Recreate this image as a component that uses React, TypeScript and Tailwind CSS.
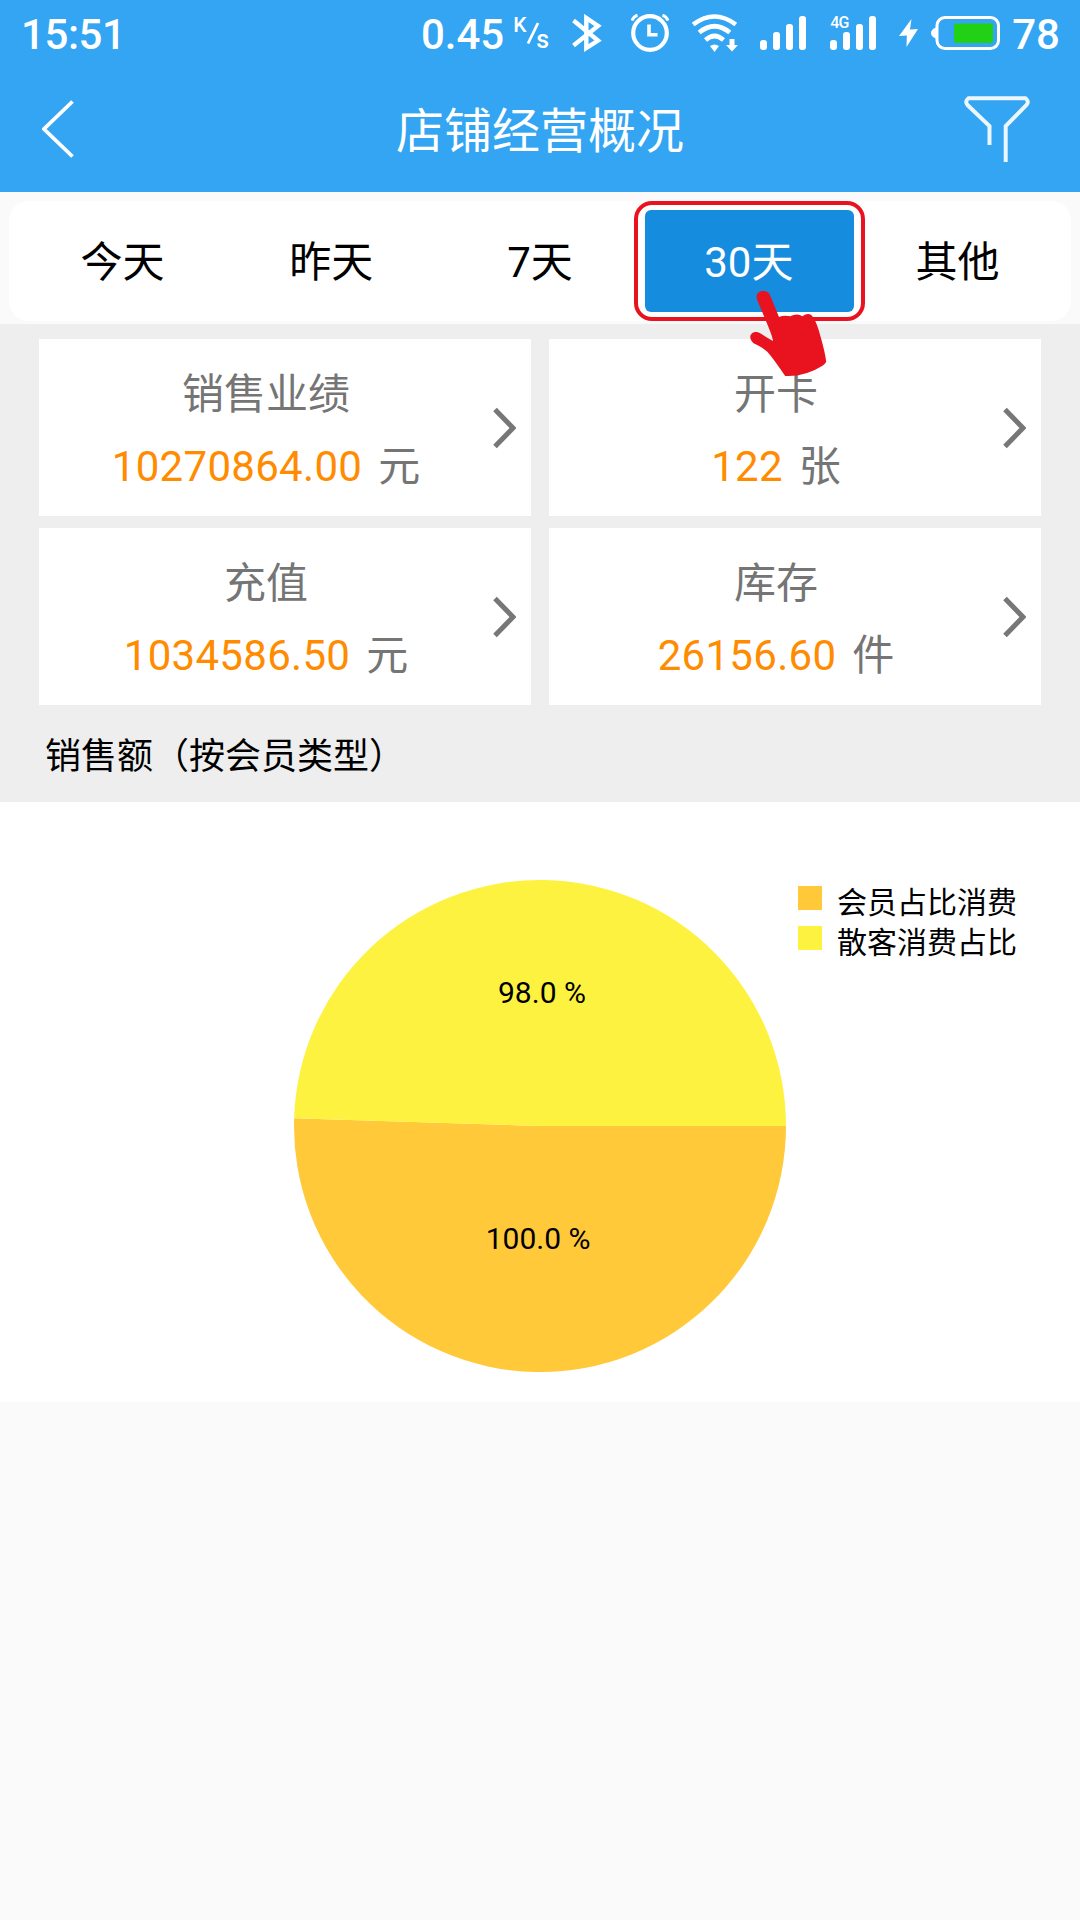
import { useState } from "react";

type Stat = {
  label: string;
  value: string;
  unit: string;
};

type Slice = {
  label: string;
  value: number;
  color: string;
};

const PERIODS = ["今天", "昨天", "7天", "30天", "其他"];

const STATS: Stat[] = [
  { label: "销售业绩", value: "10270864.00", unit: "元" },
  { label: "开卡", value: "122", unit: "张" },
  { label: "充值", value: "1034586.50", unit: "元" },
  { label: "库存", value: "26156.60", unit: "件" },
];

const SLICES: Slice[] = [
  { label: "会员占比消费", value: 100, color: "#ffc939" },
  { label: "散客消费占比", value: 98, color: "#fef240" },
];

const SignalBars = () => (
  <svg width="46" height="34" viewBox="0 0 46 34" fill="currentColor">
    <rect x="0" y="24" width="7" height="10" rx="3" />
    <rect x="13" y="16" width="7" height="18" rx="3" />
    <rect x="26" y="8" width="7" height="26" rx="3" />
    <rect x="39" y="0" width="7" height="34" rx="3" />
  </svg>
);

const StatusBar = () => (
  <div className="flex h-[66px] items-center pr-[20px] pl-[21px] font-medium">
    <span className="pt-[3px] text-[42px] leading-none tracking-[-0.4px]">
      15:51
    </span>

    {/* Velocidad de red */}
    <span className="ml-auto pt-[3px] text-[42px] leading-none">0.45</span>
    <div className="relative ml-[9px] h-[40px] w-[36px] text-[21px] leading-none">
      <span className="absolute top-[2px] left-0">K</span>
      <svg className="absolute inset-0" width="36" height="40" fill="none">
        <path d="M25 10 15 30.5" stroke="currentColor" strokeWidth="2.8" />
      </svg>
      <span className="absolute top-[14px] left-[23px] text-[25px]">s</span>
    </div>

    {/* Bluetooth */}
    <svg className="ml-[23px]" width="30" height="38" viewBox="0 0 30 38" fill="none" stroke="currentColor" strokeWidth="4.4">
      <path d="M1.5 6.5 26 26.5 14.3 34V4L26 12 1.5 31.5" />
    </svg>

    {/* Alarma */}
    <svg className="ml-[29px]" width="38" height="38" viewBox="0 0 38 38" fill="none" stroke="currentColor">
      <circle cx="19" cy="19" r="16.8" strokeWidth="4.2" />
      <path d="M18 10.5v10.2h8.5" strokeWidth="3.6" />
      <path d="M1 6.5Q2.5 2.5 6.5 1M37 6.5Q35.5 2.5 31.5 1" strokeWidth="3" />
    </svg>

    {/* Wifi */}
    <svg className="ml-[23px]" width="46" height="38" viewBox="0 0 46 38" fill="none" stroke="currentColor" strokeWidth="4.6">
      <path d="M1.2 10.5Q22.5-5.5 43.8 10.5" />
      <path d="M7.2 18.5Q22.5 6 37.8 18.5" />
      <path d="M13.5 26Q22.5 18 31.5 26" />
      <path d="M18 32q4.5-3 9 0l-4.5 6z" fill="currentColor" stroke="none" />
      <path d="M37.5 25h5v6H46l-6 6.5-6-6.5h3.5z" fill="currentColor" stroke="none" />
    </svg>

    <div className="ml-[22px]">
      <SignalBars />
    </div>
    <div className="relative ml-[24px]">
      <SignalBars />
      <span className="absolute top-[-1px] left-0 text-[16px] leading-none font-medium tracking-[-0.8px]">
        4G
      </span>
    </div>

    {/* Batería cargando */}
    <svg className="ml-[23px]" width="19" height="28" viewBox="0 0 19 28" fill="currentColor">
      <path d="M12.5 0 0 17l7.8-.6L7.5 28 19 10l-8 .6z" />
    </svg>
    <svg className="ml-[13px]" width="69" height="34" viewBox="0 0 69 34">
      <path d="M5 11.5Q0 13.5 0 17t5 5.5z" fill="currentColor" />
      <rect x="6" y="1.5" width="61.5" height="31" rx="8" fill="none" stroke="currentColor" strokeWidth="3" />
      <rect x="23" y="7.5" width="39" height="19.5" rx="1" fill="#22d116" />
    </svg>
    <span className="ml-[12px] pt-[3px] text-[42px] leading-none">78</span>
  </div>
);

const TitleBar = () => (
  <div className="flex h-[126px] items-center justify-between pr-[50px] pl-[42px]">
    <button type="button" aria-label="返回" className="w-[66px]">
      <svg width="32" height="58" viewBox="0 0 32 58" fill="none" stroke="currentColor" strokeWidth="3.8">
        <path d="M30.5 1.5 2 29l28.5 27.5" />
      </svg>
    </button>
    <h1 className="pt-[5px] pl-[8px] text-[48px] leading-none">店铺经营概况</h1>
    <button type="button" aria-label="筛选">
      <svg width="66" height="66" viewBox="0 0 66 66" fill="none" stroke="currentColor" strokeWidth="4" className="opacity-90">
        <path d="M25.5 49V30L3.5 9Q.5 5.5 4.5 2.2h57Q65.5 5.5 62.5 9L41.7 30v36" />
      </svg>
    </button>
  </div>
);

const PointingHand = () => (
  <svg
    className="pointer-events-none absolute top-[80px] left-[103px] z-10"
    width="80"
    height="88"
    viewBox="0 0 80 88"
    fill="#e8131f"
  >
    <path d="M9.2 10C7 4 11 1 15.5 1c3 0 5.500 1.500 6.500 4l9 22q5-2 11.300-.7 7-3.500 12.100 0 7.500-5.300 11.100 1.700Q69 33 72.600 46.700 77 62 78.200 71.700 77 74 74.500 75.800 57 87 37.200 86 25 68 19.300 61.700 14 57 5.500 53.300C-1 47 3.500 41 8.900 42c4 .5 7 4.500 16.200 9-1-6-4-12-6.500-18.500z" />
  </svg>
);

const StatCard = ({ label, value, unit }: Stat) => (
  <div className="flex h-[177px] items-center bg-white pr-[15px]">
    <div className="flex flex-1 flex-col items-center pt-[6px] text-[42px] text-[#757575]">
      <span className="leading-[72px]">{label}</span>
      <span className="leading-[72px]">
        <span className="tracking-[0.3px] text-[#ff8c00]">{value}</span>
        <span className="ml-[16px]">{unit}</span>
      </span>
    </div>
    <svg width="23" height="42" viewBox="0 0 23 42" fill="none" stroke="#777777" strokeWidth="5">
      <path d="M2 2.5 20 21 2 39.5" />
    </svg>
  </div>
);

const RADIUS = 246;

const PieChart = ({ slices }: { slices: Slice[] }) => {
  const total = slices.reduce((sum, slice) => sum + slice.value, 0);
  let angle = 0;

  return (
    <svg width="492" height="492" viewBox="-246 -246 492 492">
      {slices.map((slice) => {
        const start = angle;
        const end = start + (slice.value / total) * Math.PI * 2;
        const middle = (start + end) / 2;
        const large = end - start > Math.PI ? 1 : 0;
        angle = end;

        return (
          <g key={slice.label}>
            <path
              d={`M0 0L${RADIUS * Math.cos(start)} ${RADIUS * Math.sin(start)}A${RADIUS} ${RADIUS} 0 ${large} 1 ${RADIUS * Math.cos(end)} ${RADIUS * Math.sin(end)}Z`}
              fill={slice.color}
            />
            <text
              x={Math.cos(middle) * RADIUS * 0.5}
              y={Math.sin(middle) * RADIUS * 0.5}
              textAnchor="middle"
              className="fill-black text-[30px]"
            >
              {slice.value.toFixed(1)} %
            </text>
          </g>
        );
      })}
    </svg>
  );
};

export default function App() {
  const [period, setPeriod] = useState("30天");

  return (
    <div className="min-h-[1920px] w-[1080px] bg-[#fafafa] font-[Roboto,'Noto_Sans_CJK_SC',sans-serif] text-black">
      <header className="h-[192px] bg-[#33a5f2] text-white">
        <StatusBar />
        <TitleBar />
      </header>

      {/* Periodos */}
      <div className="h-[132px] px-[9px] pt-[9px]">
        <div className="grid h-[120px] grid-cols-5 rounded-[20px] bg-white py-[9px] pr-[8px] pl-[10px]">
          {PERIODS.map((item) => {
            const selected = item === period;
            return (
              <div key={item} className="relative flex">
                <button
                  type="button"
                  onClick={() => setPeriod(item)}
                  className={`h-[102px] w-full rounded-[6px] pt-[4px] pr-[2px] text-[42px] leading-none ${
                    selected ? "bg-[#168cdf] text-white" : ""
                  }`}
                >
                  {item}
                </button>
                {selected && (
                  <>
                    <div className="pointer-events-none absolute -top-[9px] -right-[11px] -bottom-[9px] -left-[11px] rounded-[18px] border-4 border-[#e8131f]" />
                    <PointingHand />
                  </>
                )}
              </div>
            );
          })}
        </div>
      </div>

      <section className="h-[478px] bg-[#eeeeee] px-[39px] pt-[15px]">
        <div className="grid grid-cols-2 gap-x-[18px] gap-y-3">
          {STATS.map((stat) => (
            <StatCard key={stat.label} {...stat} />
          ))}
        </div>
        <h2 className="pt-[4px] pl-[6px] text-[36px] leading-[97px]">
          销售额（按会员类型）
        </h2>
      </section>

      {/* Gráfico con su leyenda */}
      <section className="relative flex h-[600px] justify-center bg-white pt-[78px]">
        <PieChart slices={SLICES} />
        <ul className="absolute top-[80px] left-[798px]">
          {SLICES.map((slice) => (
            <li key={slice.label} className="flex h-10 gap-[15px]">
              <span
                className="mt-1 size-6"
                style={{ backgroundColor: slice.color }}
              />
              <span className="pt-[1px] text-[30px] leading-10">{slice.label}</span>
            </li>
          ))}
        </ul>
      </section>
    </div>
  );
}
